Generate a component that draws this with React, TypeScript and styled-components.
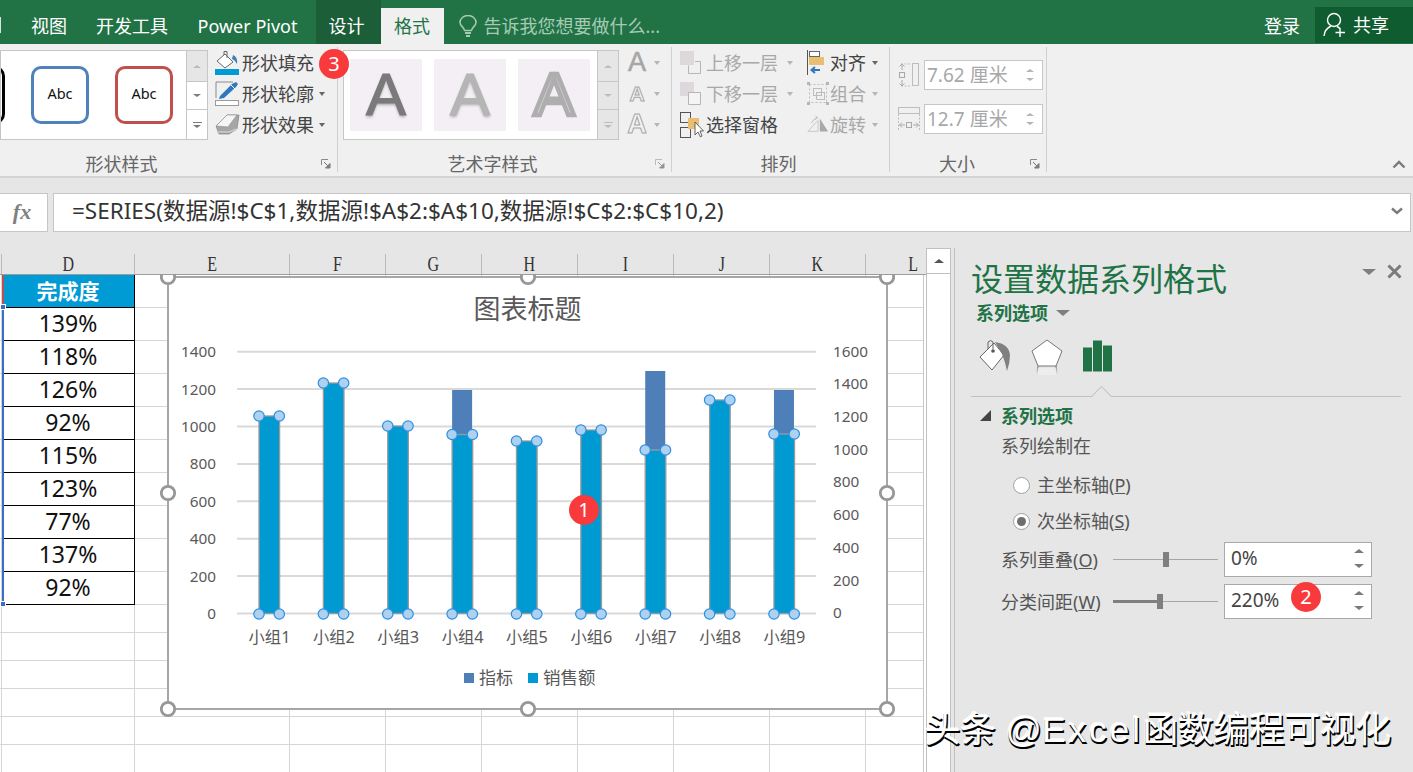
import React from "react";
import styled, { createGlobalStyle } from "styled-components";

const SANS = `"Noto Sans", "Noto Sans CJK SC", sans-serif`;

const Global = createGlobalStyle`
  html, body { margin: 0; padding: 0; background: #fff; }
  * { box-sizing: border-box; }
  body { font-family: ${SANS}; }
`;

const Root = styled.div`
  position: relative; width: 1413px; height: 772px; overflow: hidden;
  display: flex; flex-direction: column; background: #e6e6e6; color: #444;
`;

/* ---------- title bar ---------- */
const TitleBar = styled.div`
  height: 44px; flex: none; background: #217346; display: flex; align-items: flex-end; color: #fff;
  font-size: 18px; line-height: 24px;
`;
const TabStub = styled.div`
  width: 1px; margin-right: 15.5px; height: 16px; margin-bottom: 11px; background: #d5e5db; flex: none;
`;
const Tab = styled.div<{ $w: number; $kind?: "dark" | "active"; $nudge?: number }>`
  width: ${p => p.$w}px; display: flex; align-items: center; justify-content: center; flex: none;
  height: ${p => (p.$kind === "active" ? 36 : 44)}px; padding-top: ${p => (p.$kind === "active" ? 0 : 8)}px;
  padding-right: ${p => p.$nudge ?? 0}px;
  background: ${p => (p.$kind === "dark" ? "#1c5e38" : p.$kind === "active" ? "#f0f0f0" : "transparent")};
  color: ${p => (p.$kind === "active" ? "#217346" : "#fff")};
`;
const Search = styled.div`
  margin-left: 15px; height: 44px; padding-top: 8px; display: flex; align-items: center; gap: 7px; color: #a6cbb5; flex: 1;
`;
const SignIn = styled.div`
  height: 44px; padding-top: 8px; display: flex; align-items: center; margin-right: 15px;
`;
const Share = styled.div`
  width: 98px; height: 36px; margin-bottom: 1px; background: #0f5c30; display: flex; align-items: center; padding-left: 8px; gap: 6px;
`;

/* ---------- ribbon ---------- */
const Ribbon = styled.div`
  height: 134px; flex: none; background: #f0f0f0; border-bottom: 2px solid #d4d4d4; display: flex; padding-top: 3px; font-size: 18px; line-height: 24px; position: relative;
`;
const Group = styled.div<{ $w: number; $pad?: number }>`
  width: ${p => p.$w}px; flex: none; display: flex; flex-direction: column; height: 125px; padding-left: ${p => p.$pad ?? 0}px;
  border-right: 1px solid #d0d0d0;
`;
const GroupBody = styled.div`
  height: 105px; display: flex; flex: none;
`;
const GroupLabel = styled.div<{ $pad?: number; $shift: number }>`
  display: grid; grid-template-columns: 1fr auto 1fr; align-items: center; height: 24px; color: #666; margin-left: -${p => p.$pad ?? 0}px;
  & > span { grid-column: 2; margin-right: ${p => p.$shift * 2}px; }
`;
const Launcher = styled.svg`
  justify-self: end; margin-right: 6px; grid-column: 3;
`;
const Gallery = styled.div<{ $w: number; $ml?: number }>`
  width: ${p => p.$w}px; height: 90px; margin-top: 3px; margin-left: ${p => p.$ml ?? 0}px; display: flex; flex: none; background: #fff; border: 1px solid #c6c6c6; overflow: hidden;
`;
const GalleryBody = styled.div`
  flex: 1; display: flex; min-width: 0;
`;
const ShapeSwatch = styled.div<{ $c: string; $ml?: number }>`
  width: 58px; height: 57.5px; flex: none; margin: 15px 0 0 ${p => p.$ml ?? 26}px; border: 3px solid ${p => p.$c}; border-radius: 10px; background: #fff;
  display: flex; align-items: center; justify-content: center; padding-bottom: 3px; font-size: 14.5px; color: #111; font-family: "Noto Sans", sans-serif;
`;
const GalleryScroll = styled.div`
  width: 21px; flex: none; border-left: 1px solid #c6c6c6; display: flex; flex-direction: column;
`;
const ScrollCell = styled.div<{ $h: number; $gray?: boolean }>`
  height: ${p => p.$h}px; background: ${p => (p.$gray ? "#e6e6e6" : "#fff")}; border-bottom: 1px solid #c6c6c6; display: flex; align-items: center; justify-content: center; flex-direction: column; gap: 2px;
  &:last-child { border-bottom: 0; }
`;
const Tri = styled.div<{ $dir: "up" | "down"; $c?: string; $s?: number; $ml?: number }>`
  width: 0; height: 0; flex: none; margin-left: ${p => p.$ml ?? 0}px;
  border-left: ${p => p.$s ?? 4}px solid transparent; border-right: ${p => p.$s ?? 4}px solid transparent;
  ${p => (p.$dir === "up" ? "border-bottom" : "border-top")}: ${p => (p.$s ?? 4) - 0.5}px solid ${p => p.$c ?? "#7a7a7a"};
`;
const Bar = styled.div<{ $c: string }>`
  width: 9px; height: 1px; background: ${p => p.$c};
`;
const Tile = styled.div<{ $v: number }>`
  width: 72px; height: 72px; margin: 8px 0 0 ${p => (p.$v === 0 ? 6 : 12)}px; flex: none; background: #f4eff5; display: flex; align-items: center; justify-content: center;
  font-family: "Liberation Sans", sans-serif; font-weight: 400; font-size: 60px; line-height: 72px;
  color: ${p => (p.$v === 0 ? "#7a7a7a" : p.$v === 1 ? "#b5b5b5" : "#d8d4da")};
  text-shadow: ${p => (p.$v === 2 ? "none" : "0 2px 3px rgba(0,0,0,.3)")};
  -webkit-text-stroke: ${p => (p.$v === 2 ? "4.5px #aeaeae" : p.$v === 0 ? "1.2px #7a7a7a" : "1.2px #b5b5b5")};
`;
const ItemColumn = styled.div<{ $w?: number; $ml?: number }>`
  display: flex; flex-direction: column; flex: none; width: ${p => (p.$w ? p.$w + "px" : "auto")}; margin-left: ${p => p.$ml ?? 0}px;
`;
const Item = styled.div<{ $off?: boolean }>`
  height: 31px; display: flex; align-items: center; color: ${p => (p.$off ? "#a8a8a8" : "#444")}; white-space: nowrap;
`;
const IconSlot = styled.div<{ $w: number; $gap?: number }>`
  width: ${p => p.$w}px; margin-right: ${p => p.$gap ?? 3}px; height: 31px; flex: none; display: flex; align-items: center; justify-content: center;
`;
const Caret = styled.div<{ $gap?: number; $off?: boolean }>`
  width: 0; height: 0; margin-left: ${p => p.$gap ?? 5}px; flex: none;
  border-left: 3.5px solid transparent; border-right: 3.5px solid transparent; border-top: 4px solid ${p => (p.$off ? "#b5b5b5" : "#666")};
`;
const SizeRows = styled.div`
  display: flex; flex-direction: column; gap: 14px; margin-top: 13px;
`;
const SizeRow = styled.div`
  display: flex; align-items: center; gap: 4px; height: 30px;
`;
const SizeInput = styled.div`
  width: 119px; height: 30px; background: #fff; border: 1px solid #c6c6c6; display: flex; align-items: center; justify-content: space-between; padding: 0 8px 0 2px; color: #a8a8a8; font-size: 19px;
`;
const Spin = styled.div<{ $gap: number }>`
  display: flex; flex-direction: column; gap: ${p => p.$gap}px; align-items: center;
`;
const Collapse = styled.svg`
  position: absolute; right: 7px; bottom: 7px;
`;

/* ---------- formula bar ---------- */
const FormulaRow = styled.div`
  flex: none; height: 54px; padding: 15px 2px 0 0; display: flex; gap: 5px;
`;
const FxBox = styled.div`
  width: 48px; height: 39px; background: #fff; border: 1px solid #c6c6c6; border-left: 0; display: flex; align-items: center; justify-content: center; padding: 0 3px 2px 0;
  font-family: "Liberation Serif", serif; font-style: italic; font-weight: 700; font-size: 22px; color: #808080;
`;
const FormulaInput = styled.div`
  flex: 1; height: 39px; background: #fff; border: 1px solid #c6c6c6; display: flex; align-items: center; padding: 0 7px 3px 18px; justify-content: space-between; font-size: 22.5px; line-height: 30px; color: #333; white-space: nowrap;
`;

/* ---------- main ---------- */
const Main = styled.div`
  flex: 1; display: flex; min-height: 0;
`;
const Sheet = styled.div`
  width: 926px; margin-top: 15px; flex: none; display: flex; flex-direction: column; background: #fff; overflow: hidden;
`;
const ColHeader = styled.div`
  height: 28px; flex: none; display: flex; background: #e6e6e6; border-bottom: 1px solid #9c9c9c; overflow: hidden;
`;
const ColCell = styled.div<{ $w: number }>`
  width: ${p => p.$w}px; flex: none; margin-top: 7px; height: 20px; border-right: 1px solid #bbb; display: flex; align-items: center; justify-content: center;
  font-family: "Liberation Serif", serif; font-size: 20px; color: #333;
  & > span { display: inline-block; transform: scaleX(.8); }
`;
const Body = styled.div`
  position: relative; flex: 1; width: 924px; overflow: hidden; border-right: 1px solid #c8c8c8;
`;
const CellRow = styled.div<{ $h: number }>`
  display: flex; height: ${p => p.$h}px;
`;
const Cell = styled.div<{ $w: number; $kind?: "head" | "data" }>`
  width: ${p => p.$w}px; flex: none; display: flex; align-items: center; justify-content: center; padding-bottom: 2px;
  border-right: 1px solid ${p => (p.$kind ? "#000" : "#d6d6d6")};
  border-bottom: 1px solid ${p => (p.$kind ? "#000" : "#d6d6d6")};
  background: ${p => (p.$kind === "head" ? "#009ad4" : "#fff")};
  color: ${p => (p.$kind === "head" ? "#fff" : "#111")};
  font-size: ${p => (p.$kind === "head" ? 21 : 23)}px; font-weight: ${p => (p.$kind === "head" ? 700 : 400)};
`;
const SelectionLine = styled.div<{ $c: string; $top: number; $h: number }>`
  position: absolute; left: 2px; top: ${p => p.$top}px; width: 2px; height: ${p => p.$h}px; background: ${p => p.$c};
`;
const SelectionHandle = styled.div<{ $c: string; $top: number }>`
  position: absolute; left: 0; top: ${p => p.$top}px; width: 6px; height: 6px; background: ${p => p.$c}; border: 1px solid #fff;
`;
const ChartLayer = styled.svg`
  position: absolute; left: 160px; top: 0; font-family: ${SANS};
`;
const ScrollColumn = styled.div`
  width: 25px; flex: none; margin-top: 16px; border: 1px solid #c0c0c0; border-bottom: 0; background: #fff; display: flex; flex-direction: column;
`;
const ScrollUp = styled.div`
  height: 25px; border-bottom: 1px solid #c0c0c0; display: flex; align-items: center; justify-content: center;
`;
const Sash = styled.div`
  width: 1px; flex: none; margin: 16px 0 0 3px; background: #c2c2c2;
`;

/* ---------- panel ---------- */
const Panel = styled.div`
  flex: 1; padding: 27px 12px 0 16px; position: relative; font-size: 18px; line-height: 24px; color: #555;
`;
const PanelTitle = styled.div`
  font-size: 32px; line-height: 40px; height: 40px; color: #217346; white-space: nowrap;
`;
const PanelControls = styled.div`
  position: absolute; right: 11px; top: 32px; display: flex; align-items: center; gap: 11px;
`;
const SubTitle = styled.div<{ $ml: number; $mt: number }>`
  margin: ${p => p.$mt}px 0 0 ${p => p.$ml}px; display: flex; align-items: center; font-weight: 700; color: #217346; height: 24px;
`;
const PanelIcons = styled.div`
  margin: 14px 0 0 8px; height: 36px; display: flex; align-items: flex-start; gap: 20px;
`;
const Divider = styled.div`
  position: relative; margin-top: 21px; height: 1px; width: 430px; background: #c2c2c2;
  &::after {
    content: ""; position: absolute; left: 123px; top: -7px; width: 14px; height: 14px; background: #e6e6e6;
    border-left: 1px solid #c2c2c2; border-top: 1px solid #c2c2c2; transform: rotate(45deg);
  }
`;
const PlainLine = styled.div<{ $ml: number; $mt: number }>`
  margin: ${p => p.$mt}px 0 0 ${p => p.$ml}px; height: 24px;
`;
const RadioRow = styled.div<{ $mt?: number }>`
  margin: ${p => p.$mt ?? 0}px 0 0 42px; height: 36px; display: flex; align-items: center; gap: 7px;
`;
const Radio = styled.div<{ $on?: boolean }>`
  width: 17px; height: 17px; border-radius: 50%; background: #fff; border: 1px solid #9f9f9f; flex: none; display: flex; align-items: center; justify-content: center;
  &::after { content: ""; width: 9px; height: 9px; border-radius: 50%; background: ${p => (p.$on ? "#6f6f6f" : "transparent")}; }
`;
const FieldRow = styled.div<{ $mt: number }>`
  margin: ${p => p.$mt}px 0 0 30px; height: 35px; display: flex; align-items: center;
`;
const FieldLabel = styled.div`
  width: 112px; flex: none; white-space: nowrap;
`;
const Slider = styled.div`
  position: relative; width: 105px; height: 16px; margin-right: 6px; flex: none;
  &::before { content: ""; position: absolute; left: 0; right: 0; top: 7px; height: 1px; background: #a6a6a6; }
`;
const SliderFill = styled.div<{ $w: number }>`
  position: absolute; left: 0; top: 6.5px; height: 3px; width: ${p => p.$w}px; background: #7f7f7f;
`;
const SliderThumb = styled.div<{ $x: number }>`
  position: absolute; left: ${p => p.$x}px; top: 0; width: 6px; height: 15px; background: #7f7f7f;
`;
const FieldInput = styled.div`
  width: 148px; height: 35px; background: #fff; border: 1px solid #a9a9a9; display: flex; align-items: center; justify-content: space-between; padding: 0 7px 3px 6px; color: #444; font-size: 19px;
`;

const Badge = styled.div<{ $x: number; $y: number }>`
  position: absolute; left: ${p => p.$x - 15}px; top: ${p => p.$y - 15}px; width: 30px; height: 30px; border-radius: 50%; background: #f83a3c; color: #fff;
  display: flex; align-items: center; justify-content: center; font-size: 20px; line-height: 30px; font-family: "Noto Sans", sans-serif;
`;
const Watermark = styled.div`
  position: absolute; left: 925px; top: 707px; color: #fff; font-family: "Liberation Sans", "Noto Sans CJK SC", sans-serif; font-size: 35.5px; line-height: 46px; white-space: nowrap;
  text-shadow: 1.5px 1.5px 0 #000, 0 1.5px 0 #000, -1px -1px 0 rgba(255,255,255,.9);
  & > span { letter-spacing: 2.8px; }
`;

/* ---------- icons ---------- */
const FillIcon = () => (
  <svg width="25" height="25" viewBox="0 0 25 25">
    <path d="M2 11 L10 4 L18 12 L10 18 Z" fill="#fff" stroke="#666" strokeWidth="1" />
    <path d="M9 5 V1.5 H12 V8" fill="none" stroke="#666" strokeWidth="1" />
    <path d="M18 5 Q23 7 22 14 Q20 10 17 9 Z" fill="#3f7fb8" />
    <rect x="0" y="19" width="24" height="6" fill="#009ad4" />
  </svg>
);
const OutlineIcon = () => (
  <svg width="25" height="25" viewBox="0 0 25 25">
    <path d="M1 17 V1 H18" fill="none" stroke="#8a8a8a" strokeWidth="1" />
    <path d="M5 15 L17 3 L21 1 L23 3 L21 6 L9 17 L4 18 Z" fill="#2f78bd" />
    <path d="M16 4 L20 8" stroke="#fff" strokeWidth="1" />
    <rect x="0.5" y="19.5" width="23" height="5" fill="#fff" stroke="#9a9a9a" />
  </svg>
);
const EffectIcon = () => (
  <svg width="25" height="25" viewBox="0 0 25 25">
    <path d="M1 14 L12 3 H24 L22 17 L14 22 H4 Z" fill="#a6a6a6" stroke="#777" strokeWidth="0.6" />
    <path d="M1 14 L12 3 H22 L13 15 Z" fill="#f5f5f5" stroke="#888" strokeWidth="0.6" />
    <path d="M2 20 H14 L22 17" fill="none" stroke="#ccc" strokeWidth="1.5" />
  </svg>
);
const LayerIcon = ({ down }: { down?: boolean }) => (
  <svg width="21" height="25" viewBox="0 0 21 25">
    <rect x="0" y="1" width="14" height="14" fill="#dcd8dc" />
    <path d={down ? "M8.5 11.5 H20.5 V23.5 H8.5 Z" : "M8.5 15.5 V23.5 H20.5 V11.5 H15"} fill={down ? "#f4f4f4" : "none"} stroke="#b5b5b5" />
  </svg>
);
const PaneIcon = () => (
  <svg width="24" height="26" viewBox="0 0 24 26">
    <rect x="0.5" y="0.5" width="10" height="10" fill="none" stroke="#555" />
    <rect x="0.5" y="15.5" width="10" height="10" fill="none" stroke="#555" />
    <rect x="8" y="6" width="11" height="11" fill="#e9bd72" />
    <path d="M15 10 V23 L18 20 L20.5 25 L22 24 L20 19 H23.5 Z" fill="#fff" stroke="#555" strokeWidth="0.9" />
  </svg>
);
const AlignIcon = () => (
  <svg width="18" height="26" viewBox="0 0 18 26">
    <path d="M0.5 0 V25" stroke="#555" />
    <rect x="2.5" y="1.5" width="10" height="5" fill="#fff" stroke="#666" />
    <rect x="2" y="7" width="15" height="8" fill="#e9bd72" />
    <path d="M13 20 H5 M8 17 L4.5 20 L8 23" fill="none" stroke="#2f78bd" strokeWidth="2" />
  </svg>
);
const GroupIcon = () => (
  <svg width="22" height="25" viewBox="0 0 22 25">
    <rect x="2.5" y="3.5" width="17" height="18" fill="none" stroke="#bdbdbd" strokeDasharray="2 2" />
    <rect x="6.5" y="7.5" width="8" height="7" fill="none" stroke="#bdbdbd" />
    <rect x="9.5" y="11.5" width="8" height="7" fill="none" stroke="#bdbdbd" />
    <path d="M0 1 H3 V4 H0 Z M19 1 H22 V4 H19 Z M0 21 H3 V24 H0 Z M19 21 H22 V24 H19 Z" fill="#b5b5b5" />
  </svg>
);
const RotateIcon = () => (
  <svg width="24" height="25" viewBox="0 0 24 25">
    <path d="M1 20 L12 8 V20 Z" fill="none" stroke="#c4c4c4" />
    <path d="M14 6 L23 20 H14 Z" fill="#a8a8a8" />
    <path d="M5 11 Q7 6 11 5 M9 3 L12 5 L9 7" fill="none" stroke="#bdbdbd" />
  </svg>
);
const HeightIcon = () => (
  <svg width="22" height="26" viewBox="0 0 22 26">
    <rect x="14.5" y="1.5" width="6" height="22" fill="none" stroke="#bdbdbd" />
    <path d="M3 2 H13 M3 24 H13" stroke="#bdbdbd" strokeDasharray="2 1.5" />
    <path d="M4 2 V8 M1.5 4.5 L4 2 L6.5 4.5 M4 18 V24 M1.5 21.5 L4 24 L6.5 21.5" fill="none" stroke="#a8a8a8" />
    <rect x="1.5" y="10.5" width="5" height="5" fill="none" stroke="#a8a8a8" />
  </svg>
);
const WidthIcon = () => (
  <svg width="22" height="26" viewBox="0 0 22 26">
    <rect x="0.5" y="1.5" width="21" height="6" fill="none" stroke="#bdbdbd" />
    <path d="M0.5 8 V24 M21.5 8 V24" stroke="#bdbdbd" strokeDasharray="2 1.5" />
    <path d="M2 19 H7 M4 16.5 L1.5 19 L4 21.5 M15 19 H20 M18 16.5 L20.5 19 L18 21.5" fill="none" stroke="#a8a8a8" />
    <rect x="8.5" y="16.5" width="5" height="5" fill="none" stroke="#a8a8a8" />
  </svg>
);
const TextA = styled.div<{ $s: number; $o?: boolean }>`
  width: 16px; display: flex; justify-content: center; font-family: "Liberation Sans", sans-serif; font-weight: ${p => (p.$o ? 700 : 400)}; font-size: ${p => p.$s}px; line-height: 31px;
  color: ${p => (p.$o ? "#f4f4f4" : "#a6a6a6")}; -webkit-text-stroke: ${p => (p.$o ? "1px #a6a6a6" : "0.6px #a6a6a6")};
`;
const LauncherIcon = ({ off }: { off?: boolean }) => (
  <Launcher width="10" height="10" viewBox="0 0 10 10">
    <path d="M0.5 6 V0.5 H7" fill="none" stroke={off ? "#bbb" : "#8a8a8a"} />
    <path d="M3 3 L8 8 M9 4.5 V9 H4.5 Z" fill="#8a8a8a" stroke={off ? "#999" : "#777"} strokeWidth="1" />
  </Launcher>
);
const Bulb = () => (
  <svg width="18" height="23" viewBox="0 0 18 23">
    <path d="M5.5 15.5 C5 12 1 11 1 7.5 A8 7 0 0 1 17 7.5 C17 11 13 12 12.5 15.5 Z" fill="none" stroke="#a6cbb5" strokeWidth="1.5" />
    <path d="M6 18 H12 M7 21 H11" stroke="#a6cbb5" strokeWidth="2" />
  </svg>
);
const UserPlus = () => (
  <svg width="24" height="26" viewBox="0 0 24 26">
    <circle cx="11" cy="8" r="6.5" fill="none" stroke="#fff" strokeWidth="1.4" />
    <path d="M1 24 C1.5 18 5 15.5 8 14 M14 14.5 C15 15 16 15.5 17 16.5" fill="none" stroke="#fff" strokeWidth="1.4" />
    <path d="M17 16 V25 M12.5 20.5 H22" stroke="#fff" strokeWidth="1.4" />
  </svg>
);
const BucketPanel = () => (
  <svg width="32" height="36" viewBox="0 0 32 36">
    <path d="M1 18 L15 4 L25 16 L13 31 Z" fill="#fff" stroke="#666" strokeWidth="1" />
    <path d="M9 10 V3 Q12 0 14 3 V10" fill="none" stroke="#666" />
    <circle cx="14" cy="12" r="1.8" fill="#555" />
    <path d="M16 3 Q30 5 31 16 Q31 24 28 32 Q26 22 23 15 Z" fill="#808080" />
  </svg>
);
const PentagonPanel = () => (
  <svg width="32" height="36" viewBox="0 0 32 36">
    <defs>
      <linearGradient id="fadeg" x1="0" y1="0" x2="0" y2="1">
        <stop offset="0" stopColor="#888" />
        <stop offset="1" stopColor="#e6e6e6" />
      </linearGradient>
    </defs>
    <path d="M16 1 L31 12 L25 27 H7 L1 12 Z" fill="#fff" stroke="#777" strokeWidth="1" />
    <path d="M7 27 L6 35 M25 27 L26 35" stroke="url(#fadeg)" strokeWidth="1.5" />
    <rect x="7" y="29" width="18" height="7" fill="#f2f2f2" opacity=".6" />
  </svg>
);
const BarsPanel = () => (
  <svg width="30" height="33" viewBox="0 0 30 32">
    <rect x="0" y="8" width="9" height="24" fill="#217346" />
    <rect x="10" y="1" width="9" height="31" fill="#217346" />
    <rect x="20" y="6" width="9" height="26" fill="#217346" />
  </svg>
);

/* ---------- chart ---------- */
const centers = Array.from({ length: 9 }, (_, i) => 269 + 64.37 * i);
const tops = [416, 383, 426, 434.5, 441, 430, 450, 400, 434];
const darkTops: Record<number, number> = { 3: 390, 6: 371, 8: 390 };
const gridY = [351.7, 389.1, 426.5, 463.9, 501.3, 538.7, 576.1, 613.5];
const rightY = [351, 383.7, 416.5, 449, 481.5, 514.2, 547, 580, 612.5];
const frameHandles: [number, number][] = [[168, 277], [528, 277], [887, 277], [168, 493], [887, 493], [168, 709], [528, 709], [887, 709]];

const Chart = () => (
  <ChartLayer width="735" height="445" viewBox="160 275 735 445">
    <rect x="168" y="277" width="719" height="432" fill="#fff" stroke="#a6a6a6" strokeWidth="2" />
    <text x="527.5" y="319" textAnchor="middle" fontSize="27" fill="#595959">图表标题</text>
    {gridY.map(y => <line key={y} x1="237" x2="816" y1={y} y2={y} stroke="#d9d9d9" strokeWidth="2" />)}
    {gridY.map((y, i) => (
      <text key={y} x="216" y={y + 5.5} textAnchor="end" fontSize="15.3" fill="#595959">{1400 - i * 200}</text>
    ))}
    {rightY.map((y, i) => (
      <text key={y} x="833" y={y + 5.5} fontSize="15.3" fill="#595959">{1600 - i * 200}</text>
    ))}
    {centers.map((c, i) => (
      <g key={c}>
        {darkTops[i] !== undefined && <rect x={c - 10} y={darkTops[i]} width="20" height={tops[i] - darkTops[i]} fill="#4e7fb9" />}
        <rect x={c - 10} y={tops[i]} width="20.6" height={613.5 - tops[i]} fill="#009ad2" stroke="#9a9a9a" strokeWidth="1.3" />
      </g>
    ))}
    {centers.map((c, i) =>
      [[c - 10, tops[i]], [c + 10.3, tops[i]], [c - 10, 614], [c + 10.3, 614]].map(([x, y]) => (
        <circle key={`${x}-${y}`} cx={x} cy={y} r="5.2" fill="#aed1f0" stroke="#2b8fe3" strokeWidth="1.2" />
      ))
    )}
    {centers.map((c, i) => (
      <text key={c} x={c + 0.5} y="643" textAnchor="middle" fontSize="16.3" fill="#595959">小组{i + 1}</text>
    ))}
    <rect x="464" y="673" width="10" height="10" fill="#4e7fb9" />
    <text x="479" y="684" fontSize="17" fill="#595959">指标</text>
    <rect x="528" y="673" width="10" height="10" fill="#009ad2" />
    <text x="543" y="684" fontSize="17.5" fill="#595959">销售额</text>
    {frameHandles.map(([x, y]) => (
      <circle key={`${x}-${y}`} cx={x} cy={y} r="6.7" fill="#fff" stroke="#979797" strokeWidth="2.8" />
    ))}
  </ChartLayer>
);

/* ---------- data ---------- */
const cols: [string, number][] = [["", 2], ["D", 133], ["E", 155], ["F", 96], ["G", 96], ["H", 96], ["I", 96], ["J", 96], ["K", 96], ["L", 96]];
const values = ["完成度", "139%", "118%", "126%", "92%", "115%", "123%", "77%", "137%", "92%"];
const rowHeights = [...Array(10).fill(33), ...Array(6).fill(28)] as number[];

export default function App() {
  return (
    <Root>
      <Global />
      <TitleBar>
        <TabStub />
        <Tab $w={65}>视图</Tab>
        <Tab $w={101}>开发工具</Tab>
        <Tab $w={133} $nudge={3}>Power Pivot</Tab>
        <Tab $w={65} $kind="dark" $nudge={3}>设计</Tab>
        <Tab $w={63} $kind="active">格式</Tab>
        <Search><Bulb />告诉我您想要做什么...</Search>
        <SignIn>登录</SignIn>
        <Share><UserPlus />共享</Share>
      </TitleBar>

      <Ribbon>
        <Group $w={338}>
          <GroupBody>
            <Gallery $w={208}>
              <GalleryBody>
                <ShapeSwatch $c="#000" $ml={-54} />
                <ShapeSwatch $c="#4f81bd">Abc</ShapeSwatch>
                <ShapeSwatch $c="#c0504d">Abc</ShapeSwatch>
              </GalleryBody>
              <GalleryScroll>
                <ScrollCell $h={31} $gray><Tri $dir="up" $c="#bcbcbc" /></ScrollCell>
                <ScrollCell $h={28}><Tri $dir="down" /></ScrollCell>
                <ScrollCell $h={29}><Bar $c="#7a7a7a" /><Tri $dir="down" /></ScrollCell>
              </GalleryScroll>
            </Gallery>
            <ItemColumn $ml={7}>
              <Item><IconSlot $w={25} $gap={2}><FillIcon /></IconSlot>形状填充</Item>
              <Item><IconSlot $w={25} $gap={2}><OutlineIcon /></IconSlot>形状轮廓<Caret /></Item>
              <Item><IconSlot $w={25} $gap={2}><EffectIcon /></IconSlot>形状效果<Caret /></Item>
            </ItemColumn>
          </GroupBody>
          <GroupLabel $shift={47}><span>形状样式</span><LauncherIcon /></GroupLabel>
        </Group>

        <Group $w={334}>
          <GroupBody>
            <Gallery $w={276} $ml={5}>
              <GalleryBody>
                <Tile $v={0}>A</Tile>
                <Tile $v={1}>A</Tile>
                <Tile $v={2}>A</Tile>
              </GalleryBody>
              <GalleryScroll>
                <ScrollCell $h={31} $gray><Tri $dir="up" $c="#bcbcbc" /></ScrollCell>
                <ScrollCell $h={28} $gray><Tri $dir="down" $c="#bcbcbc" /></ScrollCell>
                <ScrollCell $h={29} $gray><Bar $c="#bcbcbc" /><Tri $dir="down" $c="#bcbcbc" /></ScrollCell>
              </GalleryScroll>
            </Gallery>
            <ItemColumn $ml={10}>
              <Item $off><TextA $s={27}>A</TextA><Caret $gap={9} $off /></Item>
              <Item $off><TextA $s={21} $o>A</TextA><Caret $gap={9} $off /></Item>
              <Item $off><TextA $s={27} $o>A</TextA><Caret $gap={9} $off /></Item>
            </ItemColumn>
          </GroupBody>
          <GroupLabel $shift={12}><span>艺术字样式</span><LauncherIcon off /></GroupLabel>
        </Group>

        <Group $w={218} $pad={8}>
          <GroupBody>
            <ItemColumn $w={127}>
              <Item $off><IconSlot $w={21} $gap={5}><LayerIcon /></IconSlot>上移一层<Caret $gap={9} $off /></Item>
              <Item $off><IconSlot $w={21} $gap={5}><LayerIcon down /></IconSlot>下移一层<Caret $gap={9} $off /></Item>
              <Item><IconSlot $w={24} $gap={2}><PaneIcon /></IconSlot>选择窗格</Item>
            </ItemColumn>
            <ItemColumn>
              <Item><IconSlot $w={18} $gap={5}><AlignIcon /></IconSlot>对齐<Caret $gap={6} /></Item>
              <Item $off><IconSlot $w={22} $gap={1}><GroupIcon /></IconSlot>组合<Caret $gap={6} $off /></Item>
              <Item $off><IconSlot $w={22} $gap={1}><RotateIcon /></IconSlot>旋转<Caret $gap={6} $off /></Item>
            </ItemColumn>
          </GroupBody>
          <GroupLabel $pad={8} $shift={2}><span>排列</span></GroupLabel>
        </Group>

        <Group $w={157} $pad={8}>
          <GroupBody>
            <SizeRows>
              <SizeRow>
                <HeightIcon />
                <SizeInput>7.62 厘米<Spin $gap={6}><Tri $dir="up" $c="#b5b5b5" /><Tri $dir="down" $c="#b5b5b5" /></Spin></SizeInput>
              </SizeRow>
              <SizeRow>
                <WidthIcon />
                <SizeInput>12.7 厘米<Spin $gap={6}><Tri $dir="up" $c="#b5b5b5" /><Tri $dir="down" $c="#b5b5b5" /></Spin></SizeInput>
              </SizeRow>
            </SizeRows>
          </GroupBody>
          <GroupLabel $pad={8} $shift={11}><span>大小</span><LauncherIcon /></GroupLabel>
        </Group>
        <Collapse width="14" height="9" viewBox="0 0 14 9">
          <path d="M1.5 7.5 L7 2 L12.5 7.5" fill="none" stroke="#7a7a7a" strokeWidth="2.4" />
        </Collapse>
      </Ribbon>

      <FormulaRow>
        <FxBox>fx</FxBox>
        <FormulaInput>
          =SERIES(数据源!$C$1,数据源!$A$2:$A$10,数据源!$C$2:$C$10,2)
          <svg width="12" height="8" viewBox="0 0 12 8"><path d="M1 1.5 L6 6 L11 1.5" fill="none" stroke="#7a7a7a" strokeWidth="2.4" /></svg>
        </FormulaInput>
      </FormulaRow>

      <Main>
        <Sheet>
          <ColHeader>
            {cols.map(([n, w]) => <ColCell key={n || "c"} $w={w}><span>{n}</span></ColCell>)}
          </ColHeader>
          <Body>
            {rowHeights.map((h, r) => (
              <CellRow key={r} $h={h}>
                {cols.map(([n, w]) => (
                  <Cell key={n || "c"} $w={w} $kind={n === "D" && r < 10 ? (r === 0 ? "head" : "data") : undefined}>
                    {n === "D" && r < 10 ? values[r] : ""}
                  </Cell>
                ))}
              </CellRow>
            ))}
            <SelectionLine $c="#c0504d" $top={0} $h={30} />
            <SelectionLine $c="#3a6fc4" $top={33} $h={297} />
            <SelectionHandle $c="#3a6fc4" $top={29} />
            <SelectionHandle $c="#3a6fc4" $top={326} />
            <Chart />
          </Body>
        </Sheet>
        <ScrollColumn>
          <ScrollUp><Tri $dir="up" $c="#555" $s={5} /></ScrollUp>
        </ScrollColumn>
        <Sash />
        <Panel>
          <PanelTitle>设置数据系列格式</PanelTitle>
          <PanelControls>
            <Tri $dir="down" $c="#7f7f7f" $s={7} />
            <svg width="15" height="15" viewBox="0 0 15 15"><path d="M1.5 1.5 L13.5 13.5 M13.5 1.5 L1.5 13.5" stroke="#7a7a7a" strokeWidth="3" /></svg>
          </PanelControls>
          <SubTitle $ml={5} $mt={2}>系列选项<Tri $dir="down" $c="#7f7f7f" $s={7} $ml={8} /></SubTitle>
          <PanelIcons>
            <BucketPanel />
            <PentagonPanel />
            <BarsPanel />
          </PanelIcons>
          <Divider />
          <SubTitle $ml={9} $mt={7}>
            <svg width="12" height="12" viewBox="0 0 12 12" style={{ marginRight: 9 }}><path d="M11 0 V11 H0 Z" fill="#444" /></svg>
            系列选项
          </SubTitle>
          <PlainLine $ml={30} $mt={6}>系列绘制在</PlainLine>
          <RadioRow $mt={9}><Radio /><span>主坐标轴(<u>P</u>)</span></RadioRow>
          <RadioRow><Radio $on /><span>次坐标轴(<u>S</u>)</span></RadioRow>
          <FieldRow $mt={3}>
            <FieldLabel>系列重叠(<u>O</u>)</FieldLabel>
            <Slider><SliderThumb $x={50} /></Slider>
            <FieldInput>0%<Spin $gap={11}><Tri $dir="up" $s={5} /><Tri $dir="down" $s={5} /></Spin></FieldInput>
          </FieldRow>
          <FieldRow $mt={7}>
            <FieldLabel>分类间距(<u>W</u>)</FieldLabel>
            <Slider><SliderFill $w={46} /><SliderThumb $x={44} /></Slider>
            <FieldInput>220%<Spin $gap={11}><Tri $dir="up" $s={5} /><Tri $dir="down" $s={5} /></Spin></FieldInput>
          </FieldRow>
        </Panel>
      </Main>

      <Badge $x={334} $y={64}>3</Badge>
      <Badge $x={584} $y={510}>1</Badge>
      <Badge $x={1306} $y={597}>2</Badge>
      <Watermark>头条 @<span>Excel</span>函数编程可视化</Watermark>
    </Root>
  );
}
